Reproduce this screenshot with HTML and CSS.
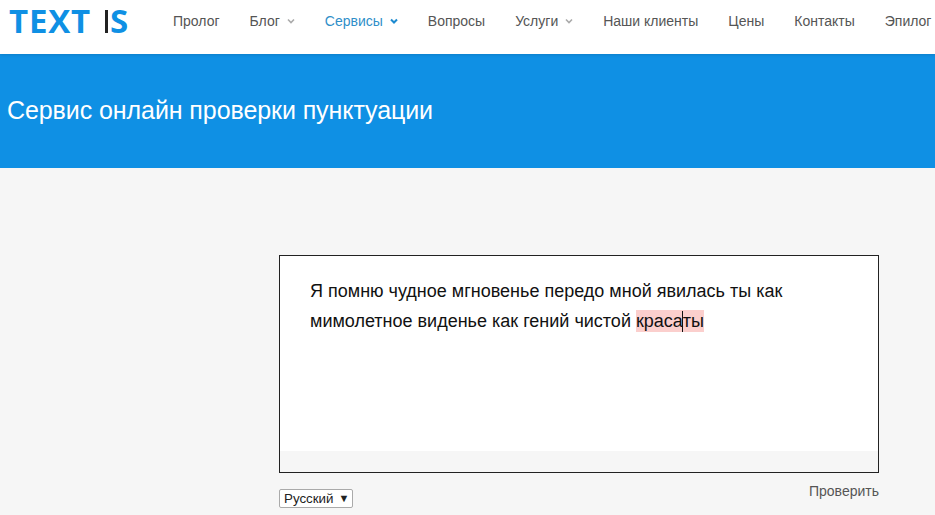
FILE: index.html
```html
<!DOCTYPE html>
<html lang="ru">
<head>
<meta charset="utf-8">
<title>Сервис онлайн проверки пунктуации</title>
<link rel="stylesheet" href="styles.css">
</head>
<body>
<header class="topbar">
  <a class="logo"><span>TEXT</span><i class="logo-bar"></i><span>S</span></a>
  <nav class="menu">
    <a>Пролог</a>
    <a>Блог<svg class="caret" viewBox="0 0 8 6"><path d="M1 1.5 4 4.5 7 1.5" /></svg></a>
    <a class="active">Сервисы<svg class="caret" viewBox="0 0 8 6"><path d="M1 1.5 4 4.5 7 1.5" /></svg></a>
    <a>Вопросы</a>
    <a>Услуги<svg class="caret" viewBox="0 0 8 6"><path d="M1 1.5 4 4.5 7 1.5" /></svg></a>
    <a>Наши клиенты</a>
    <a>Цены</a>
    <a>Контакты</a>
    <a>Эпилог</a>
  </nav>
</header>
<section class="hero"><h1>Сервис онлайн проверки пунктуации</h1></section>
<main class="content">
  <div class="checker">
    <div class="editor">
      <div class="editor-text">Я помню чудное мгновенье передо мной явилась ты как<br>мимолетное виденье как гений чистой <span class="err">краса<span class="cursor"></span>ты</span></div>
      <div class="editor-foot"></div>
    </div>
    <div class="controls">
      <div class="select">Русский<span class="arrow">▼</span></div>
      <a class="check">Проверить</a>
    </div>
  </div>
</main>
</body>
</html>
```
FILE: styles.css
```css
* { box-sizing: border-box; }
html, body { margin: 0; height: 515px; overflow: hidden; }
body { background: #f6f6f6; font-family: "Liberation Sans", Arial, sans-serif; color: #111; }
.topbar {
  height: 54px; background: #fff; display: flex; align-items: center;
  padding: 0 0 12px 9px; position: relative; z-index: 1;
  box-shadow: 0 1px 3px rgba(0,0,0,.12);
  white-space: nowrap;
}
.logo {
  display: flex; align-items: center; width: 164px; flex: none;
  font-family: "Open Sans", sans-serif; font-weight: 700; font-size: 33px;
  letter-spacing: .8px; color: #0f90e4; line-height: 1; padding-bottom: 2px;
}
.logo-bar { width: 3px; height: 23px; background: #222; margin: 2px 2px 0 14px; }
.menu { display: flex; align-items: center; gap: 30px; font-size: 14px; color: #555; }
.menu a { display: flex; align-items: center; }
.menu a.active { color: #2f8fc9; }
.caret { width: 8px; height: 6px; margin-left: 7px; fill: none; stroke: #aaa; stroke-width: 1.6; }
.active .caret { stroke: #1c8ad0; stroke-width: 2; }
.hero { height: 114px; background: #0f90e4; display: flex; align-items: center; padding: 0 7px 2px; }
.hero h1 { margin: 0; font-size: 25px; font-weight: 400; color: #fff; letter-spacing: -.08px; }
.content { display: flex; justify-content: flex-end; padding: 87px 56px 0 0; }
.checker { width: 600px; }
.editor { height: 218px; border: 1px solid #222; background: #fff; display: flex; flex-direction: column; }
.editor-text { flex: 1; padding: 20px 30px 0; font-size: 18px; line-height: 30px; color: #111; }
.editor-foot { height: 21px; background: #f6f6f6; }
.err { background: #fbcfcd; position: relative; display: inline-block; line-height: 22px; }
.cursor { display: inline-block; width: 1px; height: 21px; background: #111; vertical-align: -5px; margin-left: -1px; }
.controls { display: flex; justify-content: space-between; align-items: flex-start; margin-top: 10px; font-size: 14px; }
.select {
  width: 74px; height: 19px; margin-top: 6px; background: #fff; border: 1px solid #aaa; border-radius: 2px;
  font-size: 13.33px; line-height: 17px; padding-left: 4px; color: #222; display: flex; align-items: center;
}
.arrow { font-size: 11px; margin-left: 5px; }
.check { color: #555; font-size: 14px; line-height: 17px; }
```
